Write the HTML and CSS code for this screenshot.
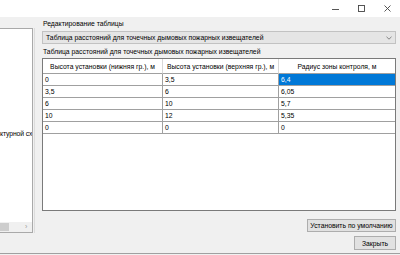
FILE: index.html
```html
<!DOCTYPE html>
<html lang="ru">
<head>
<meta charset="utf-8">
<link rel="stylesheet" href="styles.css">
</head>
<body>
<div class="window">
  <div class="titlebar">
    <div class="cap"><svg width="7" height="7" viewBox="0 0 7 7"><line x1="0" y1="4.5" x2="7" y2="4.5" stroke="#444" stroke-width="0.9"/></svg></div>
    <div class="cap"><svg width="7" height="7" viewBox="0 0 7 7"><rect x="0.5" y="0.5" width="6" height="6" fill="none" stroke="#444" stroke-width="0.9"/></svg></div>
    <div class="cap"><svg width="7" height="7" viewBox="0 0 7 7"><path d="M0.5 0.5 L6.5 6.5 M6.5 0.5 L0.5 6.5" stroke="#444" stroke-width="0.9"/></svg></div>
  </div>
  <div class="main">
    <div class="left">
      <div class="tree"><div class="tree-text">ктурной сх</div></div>
      <div class="hscroll"><div class="thumb"></div><span class="arrow">›</span></div>
    </div>
    <div class="splitter"></div>
    <div class="right">
      <div class="grp-label">Редактирование таблицы</div>
      <div class="combo">
        <span>Таблица расстояний для точечных дымовых пожарных извещателей</span>
        <svg class="chev" width="6" height="4" viewBox="0 0 6 4"><polyline points="0.5,0.8 3,3.2 5.5,0.8" fill="none" stroke="#777" stroke-width="0.9"/></svg>
      </div>
      <div class="tbl-label">Таблица расстояний для точечных дымовых пожарных извещателей</div>
      <div class="grid">
        <div class="hcell">Высота установки (нижняя гр.), м</div>
        <div class="hcell">Высота установки (верхняя гр.), м</div>
        <div class="hcell last">Радиус зоны контроля, м</div>

        <div class="cell">0</div>
        <div class="cell">3,5</div>
        <div class="cell last sel">6,4</div>

        <div class="cell">3,5</div>
        <div class="cell">6</div>
        <div class="cell last">6,05</div>

        <div class="cell">6</div>
        <div class="cell">10</div>
        <div class="cell last">5,7</div>

        <div class="cell">10</div>
        <div class="cell">12</div>
        <div class="cell last">5,35</div>

        <div class="cell">0</div>
        <div class="cell">0</div>
        <div class="cell last">0</div>
      </div>
      <button class="btn btn-default">Установить по умолчанию</button>
      <button class="btn btn-close">Закрыть</button>
    </div>
  </div>
  <div class="bottomline"></div>
</div>
</body>
</html>
```
FILE: styles.css
```css
* { box-sizing: border-box; }

body {
  margin: 0;
  width: 400px;
  height: 255px;
  overflow: hidden;
  background: #f0f0f0;
  font-family: "Liberation Sans", Arial, sans-serif;
  font-size: 6.8px;
  color: #000;
}

.window {
  width: 400px;
  height: 255px;
  display: flex;
  flex-direction: column;
}

.titlebar {
  height: 17px;
  background: #fff;
  display: flex;
  justify-content: flex-end;
}

.cap {
  width: 26px;
  height: 17px;
  display: flex;
  align-items: center;
  justify-content: center;
}

.main {
  display: flex;
  height: 236px;
}

.left {
  width: 33px;
  height: 205px;
  margin-top: 11px;
  background: #fff;
  border: 1px solid #a9a9a9;
  border-left: none;
  display: flex;
  flex-direction: column;
}

.tree {
  flex: 1;
  overflow: hidden;
  padding-top: 100px;
}

.tree-text {
  white-space: nowrap;
  line-height: 9px;
  letter-spacing: -0.1px;
}

.hscroll {
  height: 10px;
  background: #f0f0f0;
  display: flex;
  align-items: center;
}

.thumb {
  width: 9px;
  height: 8px;
  background: #cdcdcd;
}

.arrow {
  margin-left: 16px;
  color: #9a9a9a;
  font-size: 7px;
  line-height: 8px;
}

.splitter {
  width: 1px;
  margin-left: 1px;
  margin-top: 11px;
  height: 205px;
  background: #dcdcdc;
}

.right {
  margin-left: 7px;
  width: 354px;
  display: flex;
  flex-direction: column;
}

.grp-label {
  margin-top: 3px;
  height: 8px;
  line-height: 8px;
  padding-left: 1px;
  white-space: nowrap;
}

.combo {
  margin-top: 3px;
  height: 13px;
  background: #e5e5e5;
  border: 1px solid #c2c2c2;
  display: flex;
  align-items: center;
  justify-content: space-between;
  padding: 0 3px 0 3px;
  white-space: nowrap;
}

.chev { display: block; }

.tbl-label {
  margin-top: 4px;
  height: 8px;
  line-height: 8px;
  padding-left: 1px;
  white-space: nowrap;
}

.grid {
  margin-top: 2px;
  height: 153px;
  background: #fff;
  border: 1px solid #7a7a7a;
  display: grid;
  grid-template-columns: 120px 116px 1fr;
  grid-template-rows: 15px repeat(5, 12px);
  align-content: start;
}

.hcell {
  border-right: 1px solid #d8d8d8;
  border-bottom: 1px solid #a0a0a0;
  display: flex;
  align-items: center;
  justify-content: center;
  white-space: nowrap;
  overflow: hidden;
}

.cell {
  border-right: 1px solid #a0a0a0;
  border-bottom: 1px solid #a0a0a0;
  display: flex;
  align-items: center;
  padding-left: 2px;
  white-space: nowrap;
}

.last { border-right: none; }

.sel {
  background: #0078d7;
  color: #fff;
}

.btn {
  font-family: "Liberation Sans", Arial, sans-serif;
  font-size: 6.8px;
  color: #000;
  background: #e1e1e1;
  border: 1px solid #adadad;
  padding: 0;
  align-self: flex-end;
  white-space: nowrap;
}

.btn-default {
  margin-top: 8px;
  width: 89px;
  height: 13px;
}

.btn-close {
  margin-top: 4px;
  width: 42px;
  height: 14px;
}

.bottomline {
  height: 1px;
  background: #a0a0a0;
}
```
